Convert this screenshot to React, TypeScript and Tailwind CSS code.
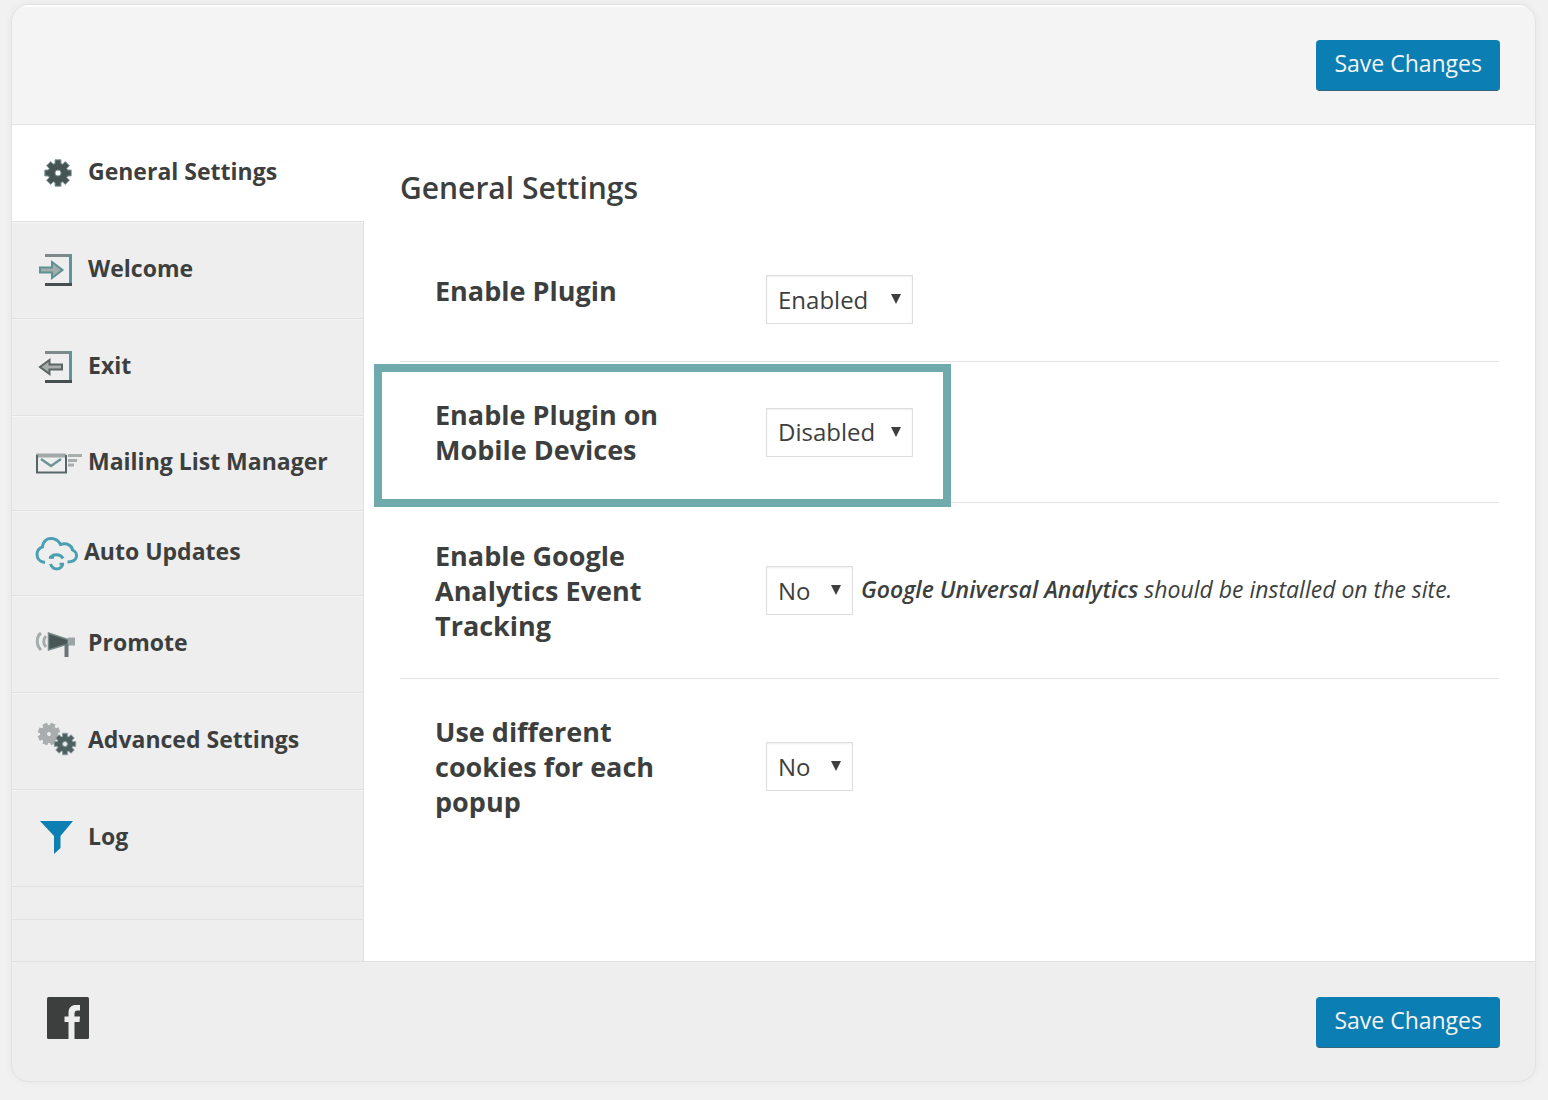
import type { ReactNode } from "react";

const gearPath = (cx: number, cy: number, outer: number, inner: number, hole: number) => {
  const pts: string[] = [];
  for (let i = 0; i < 8; i++) {
    const a = (i * Math.PI) / 4;
    const corners: [number, number][] = [
      [inner, a - 0.3],
      [outer, a - 0.22],
      [outer, a + 0.22],
      [inner, a + 0.3],
    ];
    corners.forEach(([r, t]) => pts.push(`${(cx + r * Math.sin(t)).toFixed(2)} ${(cy - r * Math.cos(t)).toFixed(2)}`));
  }
  return `M${pts.join("L")}ZM${cx - hole} ${cy}a${hole} ${hole} 0 1 0 ${hole * 2} 0a${hole} ${hole} 0 1 0 ${-hole * 2} 0Z`;
};

function Icon({ children }: { children: ReactNode }) {
  return (
    <svg width="48" height="40" viewBox="0 0 48 40" fill="none" className="shrink-0" aria-hidden="true">
      {children}
    </svg>
  );
}

const GearIcon = () => (
  <Icon>
    <path d={gearPath(23, 20, 13.5, 10, 3)} fill="#465454" stroke="#7f9494" strokeWidth="1" fillRule="evenodd" />
  </Icon>
);

const Frame = () => (
  <>
    <path d="M10 5.5H36" stroke="#7d8a8a" strokeWidth="3" />
    <path d="M35.5 4V35" stroke="#5f9598" strokeWidth="3" />
    <path d="M10 34.5H37" stroke="#454f4f" strokeWidth="3" />
  </>
);

const EnterIcon = () => (
  <Icon>
    <Frame />
    <path d="M5 17.5H17V12L27.5 20L17 28V22.5H5Z" fill="#a5acac" stroke="#5e9193" strokeWidth="2" />
  </Icon>
);

const ExitIcon = () => (
  <Icon>
    <Frame />
    <path d="M27 17.5H14.5V13L5 20L14.5 27V22.5H27Z" fill="#a9acac" stroke="#5c6464" strokeWidth="2" />
  </Icon>
);

const MailIcon = () => (
  <Icon>
    <path d="M1 12.5H31" stroke="#a3a9a9" strokeWidth="4" />
    <path d="M2 12V29.5H31V12" stroke="#566666" strokeWidth="2" />
    <path d="M6 16L16 23L26 16" stroke="#6d9496" strokeWidth="2.5" />
    <path d="M33 12.5H47M33 17.5H42M33 22H39" stroke="#a9adad" strokeWidth="3" />
  </Icon>
);

const CloudIcon = () => (
  <Icon>
    <g stroke="#4a9fb2" strokeWidth="3">
      <path d="M10 29.5C5 29 1.8 25.5 2 21C2.2 17 4.5 14.8 7.500 13.8C8 8 12 5 17 5.500C21.5 6 24 8.500 25.5 11.5C32 9.500 37 12.5 37.500 17C44 20 43 29 32.500 29" />
      <path d="M15 25.500C17 20.500 25.500 20.500 28 25.500" />
      <path d="M15.500 31C18 37.500 25.500 37.500 28 31" />
      <path d="M14 24.500H19M24.500 31H29" strokeWidth="2.500" />
    </g>
  </Icon>
);

const PromoteIcon = () => (
  <Icon>
    <path d="M6 9C1 13 1 21 6 26M11 12C8 15 8 20 11 23" stroke="#a6acac" strokeWidth="3" />
    <path d="M13.500 9L33 15.500V20L13.500 26Z" fill="#495656" stroke="#7a8a8a" strokeWidth="1.500" />
    <path d="M33 13.500H40V21.500H33Z" fill="#9ba5a5" />
    <path d="M31.500 20V33" stroke="#687575" strokeWidth="4" />
  </Icon>
);

const GearsIcon = () => (
  <Icon>
    <path d={gearPath(14, 13, 11.5, 9, 2)} fill="#a9adad" fillRule="evenodd" transform="rotate(22 14 13)" />
    <path d={gearPath(30, 23, 11, 8, 2.5)} fill="#4e6060" stroke="#8a9c9c" strokeWidth="1" fillRule="evenodd" />
  </Icon>
);

const FilterIcon = () => (
  <Icon>
    <path d="M5 3H38L25.500 18V30L19 36V18Z" fill="#0d7fb3" />
  </Icon>
);

const items = [
  { label: "General Settings", icon: <GearIcon />, row: "h-24 bg-white", gap: "gap-[5px]" },
  { label: "Welcome", icon: <EnterIcon />, row: "h-[97px]", gap: "gap-[5px]" },
  { label: "Exit", icon: <ExitIcon />, row: "h-[97px]", gap: "gap-[5px]" },
  { label: "Mailing List Manager", icon: <MailIcon />, row: "h-[95px]", gap: "gap-[5px]" },
  { label: "Auto Updates", icon: <CloudIcon />, row: "h-[85px]", gap: "gap-px" },
  { label: "Promote", icon: <PromoteIcon />, row: "h-[97px]", gap: "gap-[5px]" },
  { label: "Advanced Settings", icon: <GearsIcon />, row: "h-[97px]", gap: "gap-[5px]" },
  { label: "Log", icon: <FilterIcon />, row: "h-[97px]", gap: "gap-[5px]" },
];

function SaveButton() {
  return (
    <button
      type="submit"
      className="h-[51px] rounded-[4px] border-b border-[#33667c] bg-[#0b7fb3] px-[18px] pb-1 text-[23px] leading-8 text-[#f4f4f4]"
    >
      Save Changes
    </button>
  );
}

type FieldProps = {
  id: string;
  label: string;
  value: string;
  options: string[];
  width: string;
  highlight?: boolean;
  last?: boolean;
  note?: ReactNode;
};

function Field({ id, label, value, options, width, highlight, last, note }: FieldProps) {
  return (
    <div
      className={`relative grid grid-cols-[331px_1fr] py-[35px] pl-[35px] ${last ? "" : "border-b border-[#dfe1e1]"}`}
    >
      <label htmlFor={id} className="max-w-[240px] text-[27px] leading-[35px] font-bold">
        {label}
      </label>
      <div className="flex items-center gap-2 pt-0.5 pb-0.5">
        <div className={`relative shrink-0 ${width}`}>
          <select
            id={id}
            defaultValue={value}
            className="h-[49px] w-full appearance-none border border-[#dcdfdf] bg-white pl-[11px] text-[24px] shadow-[inset_0_1px_2px_rgba(0,0,0,0.07)]"
          >
            {options.map((o) => (
              <option key={o}>{o}</option>
            ))}
          </select>
          <svg
            width="10"
            height="10"
            viewBox="0 0 10 10"
            className="pointer-events-none absolute top-[19px] right-3"
            aria-hidden="true"
          >
            <path d="M0 0H10L5 10Z" fill="#3c3f3e" />
          </svg>
        </div>
        {note}
      </div>
      {highlight && (
        <div className="pointer-events-none absolute top-0.5 -left-[26px] h-[143px] w-[577px] border-8 border-[#6fabad]" />
      )}
    </div>
  );
}

export default function App() {
  return (
    <div className="min-h-screen bg-[#f1f1f1] pt-1 pr-3 pb-[18px] pl-[11px] font-['Open_Sans',sans-serif] text-[#3c3f3e]">
      <form
        onSubmit={(e) => e.preventDefault()}
        className="overflow-hidden rounded-[18px] border border-[#e1e3e3] bg-[#eeeeee] shadow-[0_0_8px_rgba(0,0,0,0.05)]"
      >
        <header className="flex h-[120px] items-center justify-end border-t-2 border-b border-t-white border-b-[#e3e3e3] bg-[#f4f4f4] pr-[35px]">
          <SaveButton />
        </header>

        <div className="flex min-h-[836px]">
          <nav className="w-[352px] shrink-0">
            <ul>
              {items.map((item, i) => (
                <li
                  key={item.label}
                  className={`${item.row} ${i > 0 ? "border-t border-r border-[#e0e2e2] shadow-[inset_0_1px_0_#f5f5f5]" : ""}`}
                >
                  <a href="#" className={`flex h-full items-center pl-[23px] ${item.gap}`}>
                    {item.icon}
                    <span className="pb-1 text-[23px] leading-8 font-bold whitespace-nowrap">{item.label}</span>
                  </a>
                </li>
              ))}
            </ul>
            <div className="h-[33px] border-t border-r border-[#e0e2e2]" />
            <div className="h-[42px] border-t border-r border-[#e0e2e2]" />
          </nav>

          <main className="flex-1 bg-white px-9 pt-[43px]">
            <h1 className="mb-[30px] text-[30px] leading-10 font-semibold">General Settings</h1>
            <Field id="enable" label="Enable Plugin" value="Enabled" options={["Enabled", "Disabled"]} width="w-[147px]" />
            <Field
              id="mobile"
              label="Enable Plugin on Mobile Devices"
              value="Disabled"
              options={["Enabled", "Disabled"]}
              width="w-[147px]"
              highlight
            />
            <Field
              id="analytics"
              label="Enable Google Analytics Event Tracking"
              value="No"
              options={["No", "Yes"]}
              width="w-[87px]"
              note={
                <p className="pb-1 text-[23px] leading-8 italic">
                  <strong className="font-semibold">Google Universal Analytics</strong> should be installed on the site.
                </p>
              }
            />
            <Field
              id="cookies"
              label="Use different cookies for each popup"
              value="No"
              options={["No", "Yes"]}
              width="w-[87px]"
              last
            />
          </main>
        </div>

        <footer className="flex h-[120px] items-start justify-between border-t border-[#dfe1e1] px-[35px] pt-[35px]">
          <a href="#" aria-label="Facebook">
            <svg width="42" height="42" viewBox="0 0 42 42" aria-hidden="true">
              <rect width="42" height="42" rx="1.5" fill="#3c3f3e" />
              <path
                d="M21.5 42V25H17.5V19.5H21.5V16C21.5 10.5 24.5 8 29 8H33V13.5H30.5C28.5 13.5 27.5 14.5 27.5 16.5V19.5H33L32.5 25H27.5V42Z"
                fill="#eeeeee"
              />
            </svg>
          </a>
          <SaveButton />
        </footer>
      </form>
    </div>
  );
}
